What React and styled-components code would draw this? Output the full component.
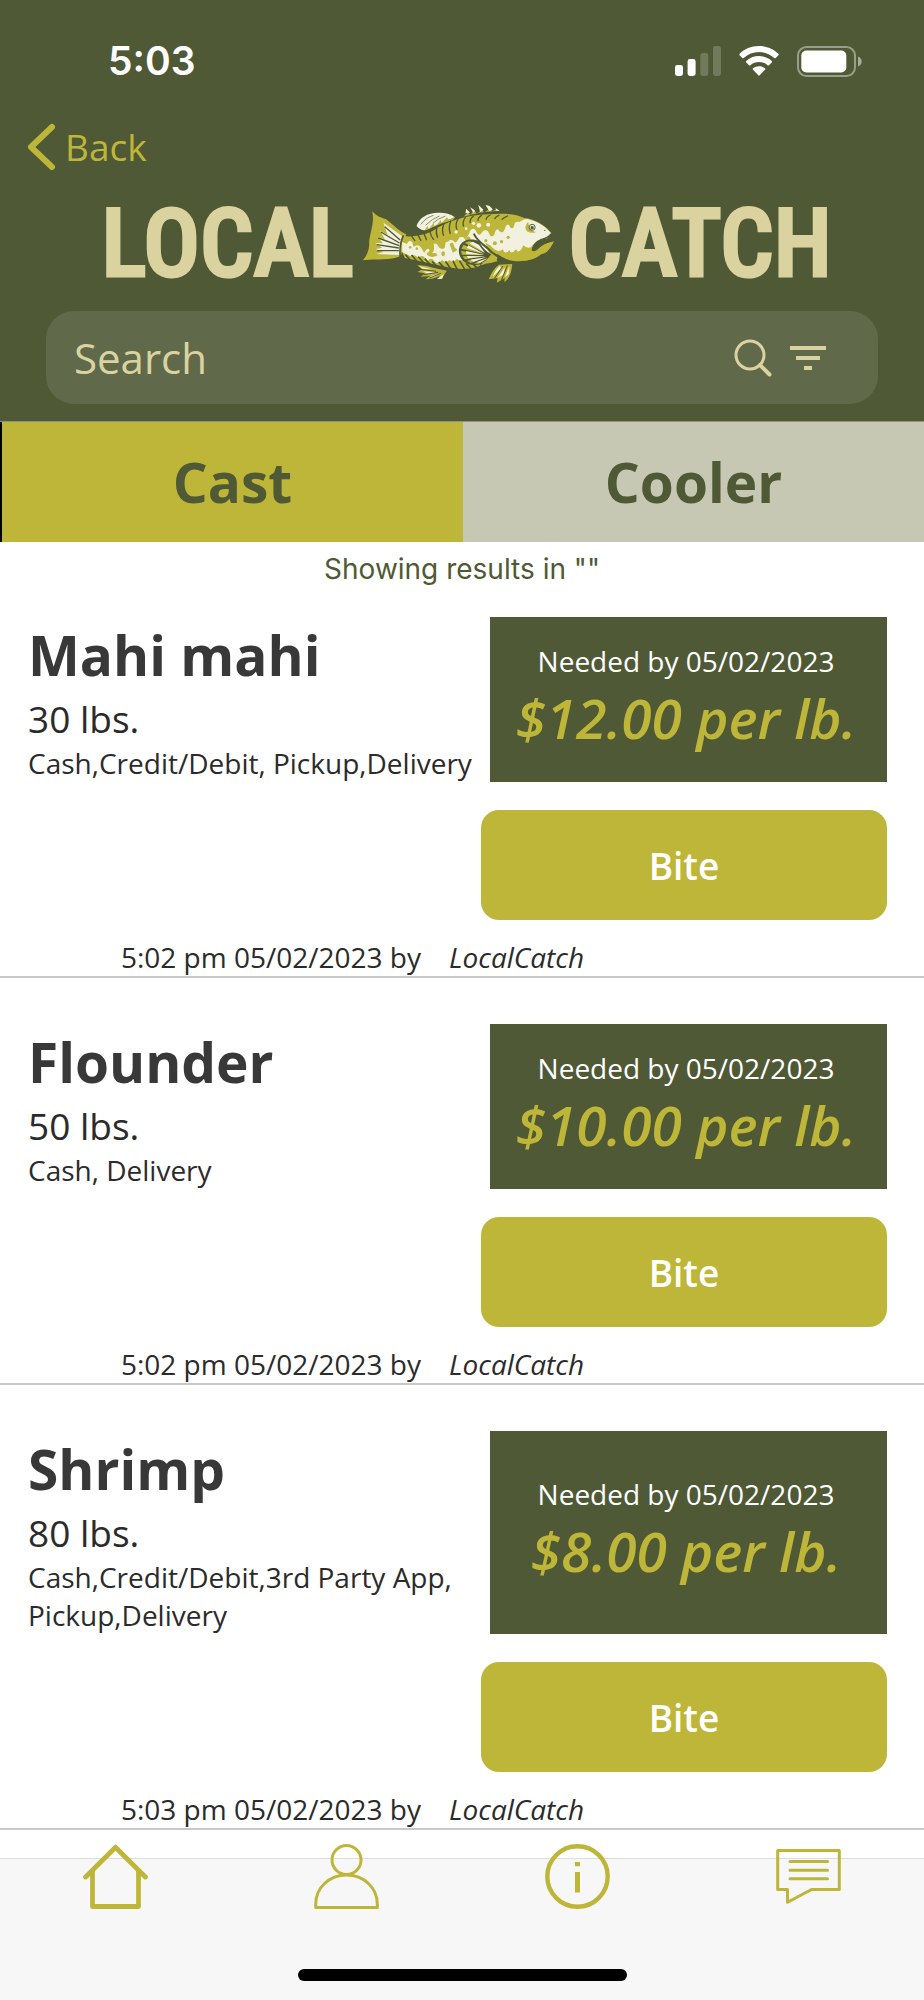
import React, { useState } from 'react';
import styled, { createGlobalStyle, ThemeProvider } from 'styled-components';

const theme = {
  color: {
    moss: '#4f5935',
    mossLight: '#606a4b',
    lime: '#bdb638',
    sand: '#dad3a0',
    stone: '#c6c8b3',
    ink: '#2b2b2b',
    title: '#383838',
    line: '#c8c8c8',
    surface: '#f7f7f7'
  },
  font: {
    base: '"Open Sans", "Noto Sans", sans-serif',
    system: 'Inter, Roboto, sans-serif',
    logo: '"Roboto Condensed", Roboto, sans-serif'
  }
};

const GlobalStyle = createGlobalStyle`
  *,
  *::before,
  *::after {
    box-sizing: border-box;
  }

  body {
    margin: 0;
    background: #fff;
    font-family: ${theme.font.base};
    color: ${theme.color.ink};
  }

  button,
  input {
    font: inherit;
    color: inherit;
    border: 0;
    padding: 0;
    background: none;
  }

  svg {
    display: block;
    flex-shrink: 0;
  }
`;

const Page = styled.div`
  display: flex;
  flex-direction: column;
  min-height: 100vh;
`;

const Header = styled.header`
  background: ${({ theme }) => theme.color.moss};
  border-bottom: 1px solid #8d927c;
  padding-bottom: 17px;
`;

const StatusBar = styled.div`
  display: flex;
  align-items: center;
  justify-content: space-between;
  height: 122px;
  padding: 0 62px 0 108px;
  color: #fff;
`;

const Clock = styled.time`
  font: 600 39px/48px ${({ theme }) => theme.font.system};
`;

const StatusIcons = styled.div`
  display: flex;
  align-items: center;
  gap: 18px;
`;

const BackLink = styled.a`
  display: flex;
  align-items: center;
  gap: 8px;
  width: fit-content;
  margin-left: 27px;
  font-size: 37px;
  line-height: 50px;
  color: ${({ theme }) => theme.color.lime};
  text-decoration: none;
`;

const Logo = styled.h1`
  display: grid;
  grid-template-columns: 1fr auto 1fr;
  align-items: center;
  gap: 8px;
  margin: 32px 8px 27px 0;
  color: ${({ theme }) => theme.color.sand};
  font: 500 94px/80px ${({ theme }) => theme.font.logo};
  -webkit-text-stroke: 3px currentColor;
  stroke-linejoin: round;

  > :first-child {
    text-align: right;
  }

  > :last-child {
    padding-left: 6px;
  }
`;

const SearchBar = styled.form`
  display: flex;
  align-items: center;
  gap: 18px;
  height: 93px;
  margin: 0 46px;
  padding: 0 52px 0 28px;
  border-radius: 28px;
  background: ${({ theme }) => theme.color.mossLight};
  color: ${({ theme }) => theme.color.sand};
`;

const SearchInput = styled.input`
  flex: 1;
  min-width: 0;
  font-size: 42px;
  line-height: 60px;
  outline: none;

  &::placeholder {
    color: inherit;
    opacity: 1;
  }
`;

const IconButton = styled.button`
  display: block;
  cursor: pointer;
`;

const Tabs = styled.div`
  display: grid;
  grid-template-columns: 1fr 1fr;
  border-left: 2px solid #000;
`;

const Tab = styled.button`
  height: 120px;
  font-size: 55px;
  font-weight: 700;
  line-height: 76px;
  color: ${({ theme }) => theme.color.moss};
  background: ${({ theme, $active }) =>
    $active ? theme.color.lime : theme.color.stone};
  cursor: pointer;
`;

const Results = styled.p`
  margin: 0;
  font: 400 28px/54px ${({ theme }) => theme.font.system};
  text-align: center;
  color: ${({ theme }) => theme.color.moss};
`;

const List = styled.main`
  display: flex;
  flex-direction: column;
  gap: 25px;
  padding-bottom: 28px;
`;

const Card = styled.article`
  padding-top: 21px;
  border-bottom: 2px solid ${({ theme }) => theme.color.line};
`;

const CardTop = styled.div`
  display: grid;
  grid-template-columns: 462fr 397fr;
  padding: 0 37px 0 28px;
`;

const CardTitle = styled.h2`
  margin: 0;
  font-size: 55px;
  line-height: 76px;
  font-weight: 700;
  color: ${({ theme }) => theme.color.title};
`;

const Amount = styled.p`
  margin: 0;
  font-size: 37px;
  line-height: 51px;
`;

const Terms = styled.p`
  margin: 0;
  font-size: 28px;
  line-height: 38px;
`;

const Offer = styled.div`
  display: flex;
  flex-direction: column;
  justify-content: center;
  padding: 0 5px 2px 0;
  background: ${({ theme }) => theme.color.moss};
  text-align: center;
  white-space: nowrap;
`;

const NeededBy = styled.p`
  margin: 0;
  font-size: 28px;
  line-height: 38px;
  color: #fff;
`;

const Price = styled.p`
  margin: 0;
  font-size: 55px;
  line-height: 76px;
  font-style: italic;
  font-weight: 600;
  color: ${({ theme }) => theme.color.lime};
`;

const CardAction = styled.div`
  display: grid;
  grid-template-columns: 453fr 406fr;
  padding: 28px 37px 18px 28px;
`;

const BiteButton = styled.button`
  grid-column: 2;
  height: 110px;
  border-radius: 18px;
  background: ${({ theme }) => theme.color.lime};
  color: #fff;
  font-size: 37px;
  line-height: 51px;
  font-weight: 600;
  cursor: pointer;
`;

const CardFooter = styled.footer`
  display: grid;
  grid-template-columns: 421fr 475fr;
  gap: 28px;
  font-size: 28px;
  line-height: 38px;
`;

const Posted = styled.span`
  text-align: right;
`;

const Author = styled.span`
  font-style: italic;
`;

const NavBar = styled.nav`
  display: flex;
  flex-direction: column;
  align-items: center;
  justify-content: space-between;
  height: 142px;
  margin-top: auto;
  padding-bottom: 19px;
  border-top: 1px solid #dedede;
  background: ${({ theme }) => theme.color.surface};
`;

const NavList = styled.div`
  display: grid;
  grid-template-columns: repeat(4, 1fr);
  justify-items: center;
  width: 100%;
  margin-top: -15px;
`;

const NavLink = styled.a`
  color: ${({ theme }) => theme.color.lime};
`;

const HomeIndicator = styled.div`
  width: 329px;
  height: 12px;
  border-radius: 6px;
  background: #000;
`;

function SignalIcon() {
  return (
    <svg width='46' height='30' viewBox='0 0 46 30' fill='currentColor'>
      <rect y='19' width='8' height='11' rx='2.4' />
      <rect x='12.6' y='13' width='8' height='17' rx='2.4' />
      <rect x='25.3' y='7' width='8' height='23' rx='2.4' opacity='0.2' />
      <rect x='38' width='8' height='30' rx='2.4' opacity='0.2' />
    </svg>
  );
}

function WifiIcon() {
  return (
    <svg width='40' height='30' viewBox='0 0 40 30' fill='currentColor'>
      <path d='M20 0C27.8 0 34.7 3 39.4 7.8Q40 8.5 39.4 9.2L36.7 12Q36 12.6 35.3 12C31.2 8.2 25.8 6 20 6S8.8 8.2 4.7 12Q4 12.6 3.3 12L.6 9.2Q0 8.5 .6 7.8C5.3 3 12.2 0 20 0Z' />
      <path d='M20 10C25 10 29.5 11.9 32.8 15Q33.5 15.7 32.8 16.4L30 19.2Q29.3 19.8 28.6 19.2C26.3 17.2 23.3 16 20 16S13.7 17.2 11.4 19.2Q10.7 19.8 10 19.2L7.2 16.4Q6.5 15.7 7.2 15C10.5 11.9 15 10 20 10Z' />
      <path d='M20 20.2C22.3 20.2 24.4 21 26 22.3Q26.7 23 26 23.7L20.7 29.3Q20 30 19.3 29.3L14 23.7Q13.3 23 14 22.3C15.6 21 17.7 20.2 20 20.2Z' />
    </svg>
  );
}

function BatteryIcon() {
  return (
    <svg width='65' height='31' viewBox='0 0 65 31' fill='currentColor'>
      <rect
        x='1'
        y='1'
        width='57'
        height='29'
        rx='8.5'
        fill='none'
        stroke='currentColor'
        strokeWidth='2'
        opacity='0.42'
      />
      <rect x='4.3' y='4.5' width='45' height='22' rx='5' />
      <path d='M61 10.5C63.2 11.3 64.7 13.2 64.7 15.5S63.2 19.7 61 20.5Z' opacity='0.5' />
    </svg>
  );
}

function BackIcon() {
  return (
    <svg width='30' height='48' viewBox='0 0 30 48' fill='none'>
      <path
        d='M25 4L4 24L25 44'
        stroke='currentColor'
        strokeWidth='6'
        strokeLinecap='round'
        strokeLinejoin='round'
      />
    </svg>
  );
}

function SearchIcon() {
  return (
    <svg width='38' height='38' viewBox='0 0 38 38' fill='none' stroke='currentColor'>
      <circle cx='16' cy='16' r='14' strokeWidth='3' />
      <path d='M26 26L35.5 35.5' strokeWidth='4' strokeLinecap='round' />
    </svg>
  );
}

function FilterIcon() {
  return (
    <svg width='36' height='38' viewBox='0 0 36 38' fill='currentColor'>
      <path d='M0 7H36V11H0ZM6 17H30V21H6ZM14 27H22V31H14Z' />
    </svg>
  );
}

const iconProps = {
  width: 65,
  height: 65,
  viewBox: '0 0 65 65',
  fill: 'none',
  stroke: 'currentColor',
  strokeLinecap: 'round',
  strokeLinejoin: 'round'
};

function HomeIcon() {
  return (
    <svg {...iconProps} strokeWidth='4.8'>
      <path d='M2.6 33L32.5 3.2L62.4 33' />
      <path d='M9.5 27V62.5H55.5V27' />
    </svg>
  );
}

function PersonIcon() {
  return (
    <svg {...iconProps} strokeWidth='3'>
      <circle cx='32.5' cy='16' r='14.5' />
      <path d='M1.7 63.4V60C1.7 44 15 31 32.5 31S63.3 44 63.3 60V63.4Z' />
    </svg>
  );
}

function InfoIcon() {
  return (
    <svg {...iconProps}>
      <circle cx='32.5' cy='32.5' r='30.2' strokeWidth='4.4' />
      <path
        d='M30 18H35V22.3H30ZM30 28H35V48.5H30Z'
        fill='currentColor'
        stroke='none'
      />
    </svg>
  );
}

function MessageIcon() {
  return (
    <svg {...iconProps} strokeWidth='3'>
      <path d='M1.7 6.5H63.3V45.5H35.5L11.5 58.3V45.5H1.7Z' />
      <path d='M14 17.5H51.5M14 26.2H51.5M14 34.7H51.5' />
    </svg>
  );
}

function FishLogo() {
  const { moss, lime } = theme.color;
  const cream = '#f2f1e0';

  return (
    <svg width='193' height='80' viewBox='36 40 578 240' aria-hidden='true'>
      {/* tail */}
      <path
        fill={lime}
        d='M66 62C78 76 92 82 108 86C124 98 144 120 168 131L152 196C120 210 82 204 38 209C52 192 58 176 57 152C60 122 74 96 66 62Z'
      />
      <path
        fill={cream}
        d='M100 96L155 136L149 193L78 190L100 184L76 176L96 171L76 157L98 158L82 138L104 146L90 120L112 133Z'
      />
      <path
        stroke={moss}
        strokeWidth='4'
        fill='none'
        d='M104 108L150 148M92 124L148 157M84 142L147 165M80 162L146 172M80 180L146 180'
      />
      <path stroke={moss} strokeWidth='5' fill='none' d='M160 134Q147 160 150 198' />
      {/* rear dorsal fin */}
      <path
        fill={cream}
        d='M199 106C206 82 232 66 264 66C284 66 304 70 314 80C292 88 266 100 234 116Q214 124 199 106Z'
      />
      <path
        fill={lime}
        d='M222 120L232 106L236 114L250 98L254 108L272 88L274 98L290 80L296 88L316 78L308 88Q270 98 222 120Z'
      />
      <path
        stroke={moss}
        strokeWidth='2'
        fill='none'
        d='M212 101Q228 80 250 74M226 104Q246 84 268 76M248 98Q262 84 286 76'
      />
      {/* spiny dorsal fin */}
      <path
        fill={lime}
        d='M340 78L354 64L360 74L372 58L380 70L396 56L402 66L418 54L426 62L440 56L448 60Q390 62 340 78Z'
      />
      <path
        fill={cream}
        d='M346 68L348 54L360 66ZM360 50L374 59L370 68ZM384 42L400 57L390 64ZM406 44Q418 42 428 57L418 62ZM436 52L448 60L438 60Z'
      />
      {/* body */}
      <path
        fill={lime}
        d='M163 137C190 139 222 134 246 122C284 94 350 72 414 71C454 67 494 68 522 82C556 84 590 108 604 128L590 145C576 142 558 154 548 168C546 178 550 180 556 178C574 160 594 156 612 152C600 172 594 188 574 190C556 206 524 216 486 210C462 206 450 194 440 190C448 208 432 216 410 218C378 232 346 240 310 232C266 226 216 212 164 202L156 184Z'
      />
      <path
        fill={cream}
        d='M156 154L170 160Q176 146 186 154L190 168Q204 158 212 170L222 186Q234 166 240 180Q254 186 248 160Q260 154 266 170Q286 184 286 156Q298 144 310 150Q316 164 328 140Q342 136 344 146Q354 138 360 120Q372 106 380 126Q388 140 398 122Q410 112 416 126Q422 144 432 132Q440 106 448 122Q460 132 466 108Q474 94 480 110Q490 120 494 96Q502 92 508 94Q526 80 540 88C568 94 590 112 602 128Q592 142 578 144Q552 154 542 170Q528 174 520 164Q506 194 498 176Q482 194 478 178Q464 194 458 176Q442 190 420 164L406 156L420 196L342 202Q334 216 320 204Q308 220 298 208Q286 220 276 208Q264 222 254 214Q242 194 232 214Q218 186 206 202Q190 188 180 196L156 184Z'
      />
      <g fill={lime}>
        <path d='M232 160Q246 150 251 162Q254 182 246 188Q260 184 262 194Q246 204 232 194Q226 186 236 184Q242 168 232 160ZM274 184Q286 176 284 194Q272 202 274 184ZM298 160Q310 150 312 168L322 178L308 186ZM344 146Q356 130 362 144Q354 162 344 146Z' />
        <circle cx='218' cy='154' r='5' />
        <circle cx='292' cy='148' r='5' />
        <circle cx='407' cy='150' r='5' />
        <circle cx='434' cy='158' r='6' />
        <circle cx='454' cy='153' r='5' />
        <circle cx='474' cy='140' r='5' />
        <circle cx='200' cy='174' r='4' />
        <circle cx='180' cy='170' r='4' />
      </g>
      <g fill={cream}>
        <circle cx='318' cy='124' r='5' />
        <circle cx='370' cy='98' r='5' />
        <circle cx='386' cy='104' r='7' />
        <circle cx='414' cy='102' r='6' />
        <circle cx='348' cy='114' r='4' />
      </g>
      {/* scale cuts along the back and the belly */}
      <path
        fill='none'
        stroke={moss}
        strokeWidth='4'
        strokeLinecap='round'
        d='M184 136L194 150M204 134L212 149M222 130L229 147M240 124Q242 138 250 146M262 140Q256 126 260 110M280 134Q274 118 281 99M300 128Q294 110 302 91M320 116Q314 102 324 84M340 106Q336 94 346 79M360 96Q358 86 370 76M384 90Q382 82 394 74M408 86Q408 80 420 73M434 84Q436 78 446 74M456 86Q462 80 472 76'
      />
      <path
        fill='none'
        stroke={moss}
        strokeWidth='5'
        d='M166 192L184 212M184 193L204 216M204 198L224 220M224 204L244 226M246 212L262 230M266 214L284 234M286 212L304 238M308 210L324 242M328 210L346 240M348 218L366 238M370 222L386 236M390 222L406 232'
      />
      {/* gill and pectoral fin */}
      <path
        fill={moss}
        d='M388 152C362 140 334 148 328 168C320 192 336 218 364 222C380 224 388 222 398 218L424 192C408 182 394 170 388 152Z'
      />
      <path
        fill={lime}
        d='M384 164L360 152Q350 152 344 157L402 186ZM402 190L340 162L334 174ZM402 193L333 180L335 192ZM404 197L337 197L344 206ZM408 200L350 210L362 217ZM412 203L370 219L386 219ZM416 206L394 217L412 218L442 212Q438 200 420 194Z'
      />
      <path
        fill={cream}
        d='M386 162L368 153L358 158L404 186ZM402 189L354 164L350 172ZM402 193L348 181L348 190ZM404 197L350 196L354 203ZM408 200L360 207L370 213ZM412 203L378 215L390 216Z'
      />
      <path
        fill='none'
        stroke={moss}
        strokeWidth='6'
        strokeLinecap='round'
        d='M372 131C384 156 406 164 424 184L444 198'
      />
      {/* ventral fins */}
      <path
        fill={lime}
        d='M201 224Q226 222 252 232L290 240Q278 262 262 266L270 256L246 264L226 266L240 256L212 258L224 248L202 244L216 236Z'
      />
      <path
        fill={cream}
        d='M206 226L244 236L218 234ZM218 242L262 244L234 250ZM240 257L272 248L250 260ZM260 265L282 250L276 264Z'
      />
      <path
        fill='none'
        stroke={moss}
        strokeWidth='3'
        d='M210 236L258 242M220 252L264 245M238 262L272 248'
      />
      <path
        fill={lime}
        d='M446 222L486 220C486 244 474 270 462 274L464 262L440 276L442 262L416 266Q424 240 446 222Z'
      />
      <path
        fill={cream}
        d='M448 226Q432 242 428 258L454 232ZM464 230L442 262L460 252ZM478 226L464 260L476 250Z'
      />
      <path
        fill='none'
        stroke={moss}
        strokeWidth='3'
        d='M458 226L434 262M472 224L454 268'
      />
      {/* head */}
      <path
        fill={lime}
        d='M534 94Q520 108 530 122Q544 130 558 124Q544 122 538 112Z'
      />
      <circle
        cx='546'
        cy='110'
        r='9'
        fill={cream}
        stroke={moss}
        strokeWidth='3'
      />
      <circle cx='546' cy='111' r='5' fill={moss} />
      <path
        fill='none'
        stroke={moss}
        strokeWidth='4'
        strokeLinecap='round'
        d='M603 130Q590 144 574 146Q550 156 546 178Q556 184 564 172Q580 156 608 150'
      />
      <circle cx='584' cy='119' r='2' fill={moss} />
    </svg>
  );
}

const listings = [
  {
    id: 1,
    name: 'Mahi mahi',
    amount: '30 lbs.',
    terms: 'Cash,Credit/Debit, Pickup,Delivery',
    needed: '05/02/2023',
    price: '$12.00',
    posted: '5:02 pm 05/02/2023'
  },
  {
    id: 2,
    name: 'Flounder',
    amount: '50 lbs.',
    terms: 'Cash, Delivery',
    needed: '05/02/2023',
    price: '$10.00',
    posted: '5:02 pm 05/02/2023'
  },
  {
    id: 3,
    name: 'Shrimp',
    amount: '80 lbs.',
    terms: 'Cash,Credit/Debit,3rd Party App, Pickup,Delivery',
    needed: '05/02/2023',
    price: '$8.00',
    posted: '5:03 pm 05/02/2023'
  }
];

const navItems = [
  { label: 'Home', href: '#home', Icon: HomeIcon },
  { label: 'Profile', href: '#profile', Icon: PersonIcon },
  { label: 'Info', href: '#info', Icon: InfoIcon },
  { label: 'Messages', href: '#messages', Icon: MessageIcon }
];

function Listing({ name, amount, terms, needed, price, posted }) {
  return (
    <Card>
      <CardTop>
        <div>
          <CardTitle>{name}</CardTitle>
          <Amount>{amount}</Amount>
          <Terms>{terms}</Terms>
        </div>
        <Offer>
          <NeededBy>Needed by {needed}</NeededBy>
          <Price>{price} per lb.</Price>
        </Offer>
      </CardTop>
      <CardAction>
        <BiteButton type='button'>Bite</BiteButton>
      </CardAction>
      <CardFooter>
        <Posted>{posted} by</Posted>
        <Author>LocalCatch</Author>
      </CardFooter>
    </Card>
  );
}

function App() {
  const [tab, setTab] = useState('Cast');

  return (
    <ThemeProvider theme={theme}>
      <GlobalStyle />
      <Page>
        <Header>
          <StatusBar>
            <Clock>5:03</Clock>
            <StatusIcons>
              <SignalIcon />
              <WifiIcon />
              <BatteryIcon />
            </StatusIcons>
          </StatusBar>
          <BackLink href='#back'>
            <BackIcon />
            Back
          </BackLink>
          <Logo>
            <span>LOCAL</span>
            <FishLogo />
            <span>CATCH</span>
          </Logo>
          <SearchBar role='search' onSubmit={(e) => e.preventDefault()}>
            <SearchInput type='text' placeholder='Search' aria-label='Search' />
            <IconButton type='submit' aria-label='Search'>
              <SearchIcon />
            </IconButton>
            <IconButton type='button' aria-label='Filter'>
              <FilterIcon />
            </IconButton>
          </SearchBar>
        </Header>
        <Tabs role='tablist'>
          {['Cast', 'Cooler'].map((name) => (
            <Tab
              key={name}
              type='button'
              role='tab'
              aria-selected={tab === name}
              $active={tab === name}
              onClick={() => setTab(name)}
            >
              {name}
            </Tab>
          ))}
        </Tabs>
        <Results>Showing results in ""</Results>
        <List>
          {listings.map((item) => (
            <Listing key={item.id} {...item} />
          ))}
        </List>
        <NavBar>
          <NavList>
            {navItems.map(({ label, href, Icon }) => (
              <NavLink key={label} href={href} aria-label={label}>
                <Icon />
              </NavLink>
            ))}
          </NavList>
          <HomeIndicator />
        </NavBar>
      </Page>
    </ThemeProvider>
  );
}

export default App;
